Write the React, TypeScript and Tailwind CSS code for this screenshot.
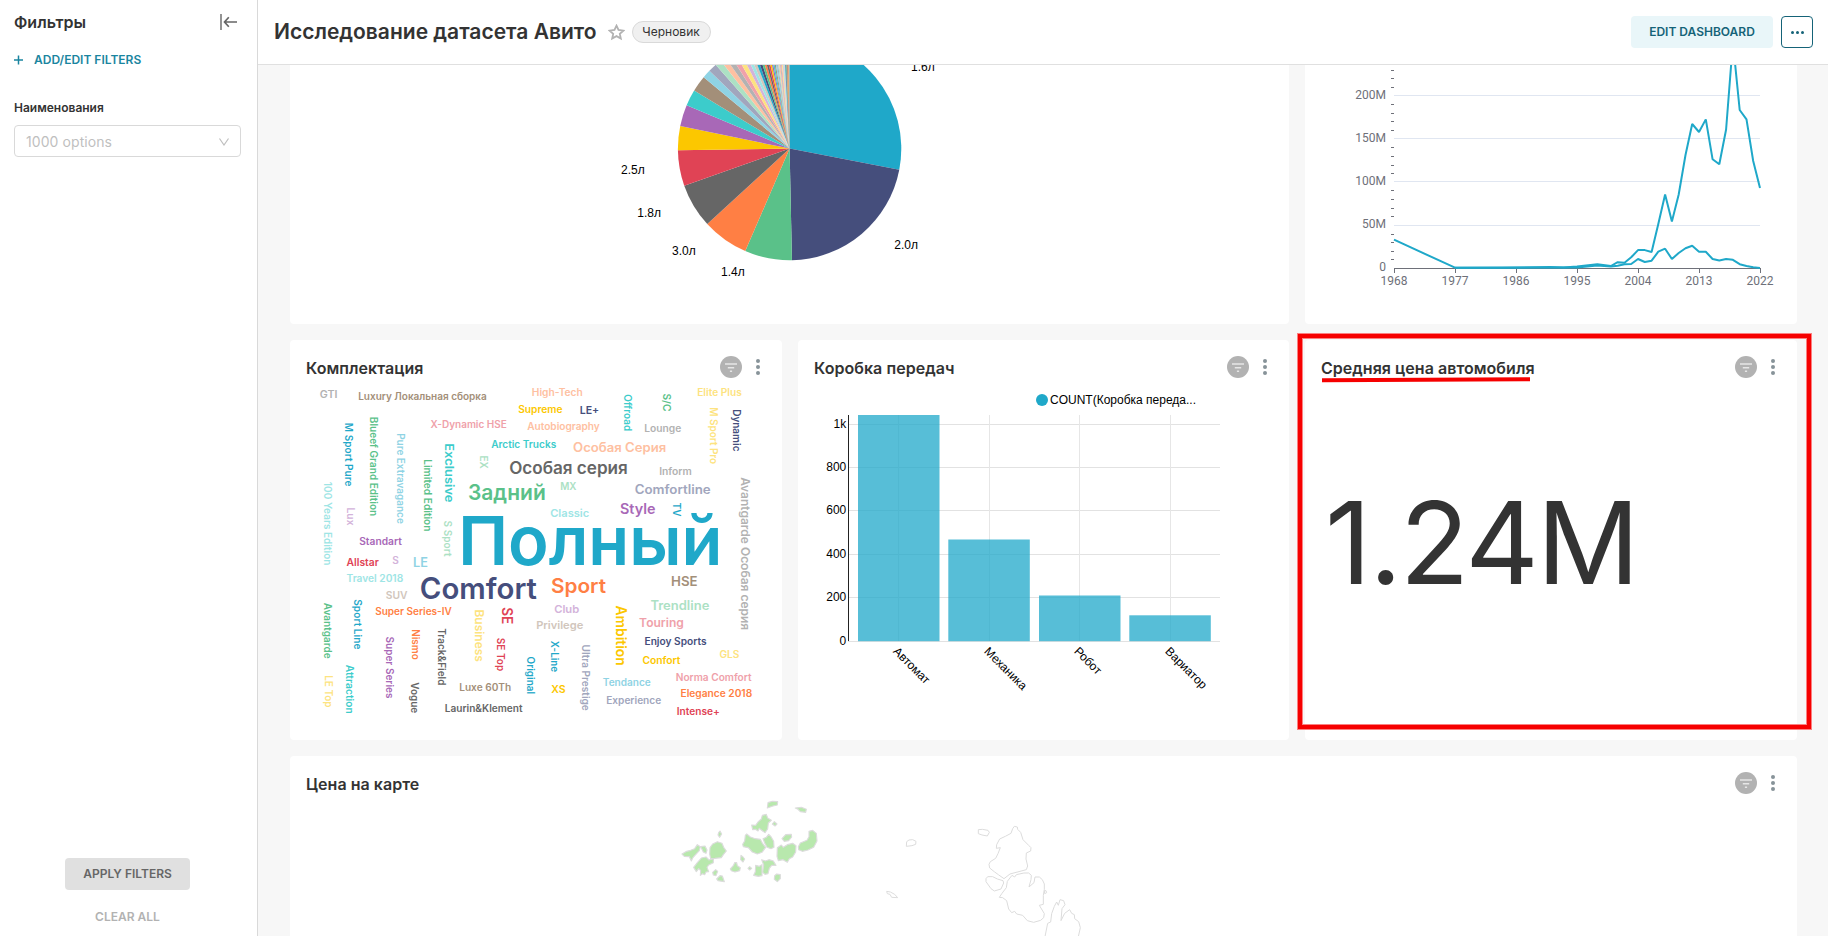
import React from "react";

const PALETTE = [
  "#1FA8C9", "#454E7C", "#5AC189", "#FF7F44", "#666666", "#E04355", "#FCC700", "#A868B7", "#3CCCCB", "#A38F79",
  "#8FD3E4", "#A1A6BD", "#ACE1C4", "#FEC0A1", "#B2B2B2", "#EFA1AA", "#FDE380", "#D3B3DA", "#9EE5E5", "#D1C6BC",
];
const [BLUE, NAVY, GREEN, ORANGE, GRAY, RED, YELLOW, PURPLE, TEAL, BROWN, SKY, SLATE, MINT, PEACH, SILVER, ROSE, LEMON, LILAC, AQUA, SAND] = PALETTE;

function CardHeader({ title }: { title: string }) {
  return (
    <div className="flex h-[54px] items-center pl-4 pr-[22px]">
      <h2 className="flex-1 pt-px text-[16px] leading-5 font-semibold tracking-[0.04px] text-[#333333]">{title}</h2>
      <svg width="22" height="22" viewBox="0 0 22 22" className="mr-[14px]">
        <circle cx="11" cy="11" r="11" fill="#b2b2b2" />
        <path d="M5 8h12M7.8 11.7h6.4M9.9 15.3h2.2" stroke="#e6e6e6" strokeWidth="1.4" />
      </svg>
      <svg width="4" height="16" viewBox="0 0 4 16" fill="#879399">
        <circle cx="2" cy="2" r="2" />
        <circle cx="2" cy="8" r="2" />
        <circle cx="2" cy="14" r="2" />
      </svg>
    </div>
  );
}

const PIE_ENDS = [
  100.9, 178.8, 203.4, 227.5, 250.6, 269.1, 281.7, 292.8, 301.3, 309.7, 314.1, 318.6, 321.9, 324.8, 327.6, 330.3, 333,
  335.2, 337.1, 338.9, 340.5, 342.1, 343.5, 344.8, 346, 347.1, 348.1, 349, 349.9, 350.7, 351.5, 352.2, 352.9, 353.6,
  354.2, 354.8, 355.4, 355.9, 356.4, 356.9, 357.3, 357.7, 358.1, 358.5, 358.8, 359.1, 359.4, 359.6, 359.8, 360,
];

function PieChart() {
  const cx = 789.6, cy = 148.6, r = 111.7;
  const at = (deg: number) => {
    const a = (deg * Math.PI) / 180;
    return `${(cx + r * Math.sin(a)).toFixed(2)} ${(cy - r * Math.cos(a)).toFixed(2)}`;
  };
  const labels: [string, number, number][] = [
    ["1.6л", 911, 70.5], ["2.0л", 894.3, 249], ["1.4л", 721, 276], ["3.0л", 672, 255], ["1.8л", 637.3, 217], ["2.5л", 621, 174],
  ];
  return (
    <svg width="999" height="259" viewBox="290 65 999 259" className="block">
      {PIE_ENDS.map((end, i) => (
        <path key={i} d={`M${cx} ${cy}L${at(i ? PIE_ENDS[i - 1] : 0)}A${r} ${r} 0 0 1 ${at(end)}Z`} fill={PALETTE[i % 20]} />
      ))}
      <g fontSize="12" fill="#000">
        {labels.map(([t, x, y]) => <text key={t} x={x} y={y} className="font-['Liberation_Sans',sans-serif]">{t}</text>)}
      </g>
    </svg>
  );
}

const PRICE_TOTAL: [number, number][] = [
  [1968, 239.7], [1977, 267.7], [1984, 267.7], [1991, 267.1], [1993, 267.5], [1995, 266.5], [1998, 264.2], [2000, 266], [2001, 262.2], [2002, 262.7],
  [2003, 257.3], [2004, 250.1], [2005, 250.1], [2006, 252], [2007, 224], [2008, 194.5], [2009, 221.5], [2010, 194.5],
  [2011, 155], [2012, 124], [2013, 132], [2014, 119.4], [2015, 159.3], [2016, 164.3], [2017, 129.5], [2018, 42],
  [2019, 110], [2020, 119.3], [2021, 161], [2022, 188],
];
const PRICE_COUNT: [number, number][] = [
  [1977, 267.8], [1995, 267.4], [1998, 265.5], [2000, 266.6], [2001, 265.8], [2002, 264.3], [2003, 264], [2004, 259], [2005, 262], [2006, 260.7],
  [2007, 251.7], [2008, 248.7], [2009, 259], [2010, 253], [2011, 248.3], [2012, 245.8], [2013, 251.8], [2014, 251.8],
  [2015, 259], [2016, 260.4], [2017, 259.1], [2018, 259.8], [2019, 264.2], [2020, 266], [2021, 267.3], [2022, 268],
];

function LineChart() {
  const x = (year: number) => 1394 + (year - 1968) * 6.778;
  const points = (d: [number, number][]) => d.map(([yr, y]) => `${x(yr).toFixed(1)},${y}`).join(" ");
  const minor = Array.from({ length: 24 }, (_, i) => i).filter((i) => i % 5 !== 0);
  return (
    <svg width="492" height="259" viewBox="1305 65 492 259" className="block">
      {[225.5, 181.5, 138.5, 95.5].map((y) => <path key={y} d={`M1394 ${y}H1760`} stroke="#E0E6F1" />)}
      {minor.map((i) => <path key={i} d={`M1391 ${Math.round(268 - i * 8.62) + 0.5}h3`} stroke="#6E7079" />)}
      <path d="M1394 268.5H1760.5" stroke="#6E7079" />
      <g fontSize="12" fill="#6E7079">
        {[1968, 1977, 1986, 1995, 2004, 2013, 2022].map((yr) => (
          <React.Fragment key={yr}>
            <path d={`M${Math.round(x(yr)) + 0.5} 268v5`} stroke="#6E7079" />
            <text x={x(yr)} y="285" textAnchor="middle" className="font-['Roboto',sans-serif]">{yr}</text>
          </React.Fragment>
        ))}
        {["0", "50M", "100M", "150M", "200M"].map((t, i) => (
          <text key={t} x="1386" y={271 - i * 43.1} textAnchor="end" className="font-['Roboto',sans-serif]">{t}</text>
        ))}
      </g>
      <g fill="none" stroke={BLUE} strokeWidth="2" strokeLinejoin="bevel">
        <polyline points={points(PRICE_TOTAL)} />
        <polyline points={points(PRICE_COUNT)} />
      </g>
    </svg>
  );
}

// text, start x, end x, baseline y, font size, colour
const ACROSS: [string, number, number, number, number, string][] = [
  ["GTI", 320.3, 337, 398.3, 10, SILVER],
  ["Luxury Локальная сборка", 358.7, 486.3, 400.3, 10, BROWN],
  ["High-Tech", 532.3, 582.3, 396, 10, PEACH],
  ["Elite Plus", 697.7, 741.3, 396, 10, LEMON],
  ["Supreme", 518.7, 562, 413, 10, YELLOW],
  ["LE+", 580.3, 598.7, 413.7, 10.5, NAVY],
  ["X-Dynamic HSE", 431, 506.3, 428, 10, ROSE],
  ["Autobiography", 527.7, 599.3, 430, 10, PEACH],
  ["Lounge", 644.7, 680.7, 432, 10, SILVER],
  ["Arctic Trucks", 491.7, 555.7, 448, 10, TEAL],
  ["Особая Серия", 573.7, 665.7, 452, 12.5, PEACH],
  ["Особая серия", 510, 627, 474, 16.8, GRAY],
  ["Inform", 659.7, 691.3, 475, 10, SILVER],
  ["Задний", 469, 544.7, 500, 21.5, GREEN],
  ["MX", 560.7, 576, 490, 10, MINT],
  ["Comfortline", 635.3, 710, 494, 12.7, SLATE],
  ["Style", 620.7, 654.7, 514, 14.3, PURPLE],
  ["Classic", 550.7, 588.7, 517, 10.5, AQUA],
  ["Полный", 461.6, 719, 565, 68, BLUE],
  ["Standart", 359.7, 401.3, 545, 10, PURPLE],
  ["Allstar", 347, 378.3, 566, 10, RED],
  ["S", 392.7, 398.3, 564, 10, LILAC],
  ["LE", 413.7, 427.3, 566.7, 12.5, SKY],
  ["Travel 2018", 347, 402.7, 582, 10, AQUA],
  ["SUV", 386.3, 407, 598.7, 10.5, SAND],
  ["Comfort", 421.3, 535.5, 599, 29.2, NAVY],
  ["Super Series-IV", 375.7, 451.3, 615.3, 10, ORANGE],
  ["Luxe 60Th", 459.7, 510.7, 691, 10, BROWN],
  ["Laurin&Klement", 445.3, 522, 712, 10, GRAY],
  ["Sport", 552, 605, 593.3, 20, ORANGE],
  ["HSE", 671.7, 697, 586, 12.7, BROWN],
  ["Club", 554.7, 578.7, 613, 10.8, LILAC],
  ["Trendline", 651, 708.7, 610, 12.5, MINT],
  ["Privilege", 536.7, 582.7, 629, 10.8, SAND],
  ["Touring", 639.7, 683.3, 627, 11.7, ROSE],
  ["Enjoy Sports", 645, 706, 645, 10, NAVY],
  ["Confort", 643, 680, 664, 10, YELLOW],
  ["GLS", 720, 739, 658, 10, LEMON],
  ["Tendance", 603.3, 650.3, 686, 10, SKY],
  ["XS", 551.7, 565, 693, 10.5, YELLOW],
  ["Experience", 606.7, 660.7, 704, 10, SLATE],
  ["Norma Comfort", 676.3, 751, 681, 10, ROSE],
  ["Elegance 2018", 681, 751.7, 697, 10, ORANGE],
  ["Intense+", 677.3, 719.3, 715, 10, RED],
];

// text, start y, end y, baseline x, font size, colour
const DOWN: [string, number, number, number, number, string][] = [
  ["M Sport Pure", 423.3, 486, 345.3, 10, BLUE],
  ["Blueef Grand Edition", 417.3, 515.7, 370.3, 10, GREEN],
  ["Pure Extravagance", 433.7, 523.3, 397.5, 10, SKY],
  ["Limited Edition", 459.7, 531, 424.3, 10, GREEN],
  ["Exclusive", 443.7, 502, 445.5, 12.3, TEAL],
  ["EX", 456, 468.3, 480.2, 10, MINT],
  ["100 Years Edition", 482.3, 565, 324.5, 10, AQUA],
  ["Lux", 508, 525, 347.2, 10, LILAC],
  ["S Sport", 521, 556, 444.5, 10, MINT],
  ["Offroad", 394.7, 430.7, 624.5, 10, TEAL],
  ["S/C", 394, 411, 663.2, 10, GREEN],
  ["M Sport Pro", 407.7, 463.7, 710.4, 10, LEMON],
  ["Dynamic", 409.7, 451, 733.5, 10, NAVY],
  ["TV", 503, 516, 673.2, 10.5, BLUE],
  ["Avantgarde Особая серия", 477.7, 629.7, 741.3, 11.8, SILVER],
  ["Avantgarde", 603.3, 658.3, 324.5, 10, GREEN],
  ["Sport Line", 599.7, 649, 354.2, 10, BLUE],
  ["Super Series", 637, 698, 386.5, 10, PURPLE],
  ["Nismo", 629.7, 659.3, 412.2, 10, ORANGE],
  ["Track&Field", 628.7, 685, 438.4, 10, GRAY],
  ["Business", 610, 661.3, 476, 11.7, LEMON],
  ["SE", 607.7, 623.7, 502.5, 14, RED],
  ["SE Top", 638.3, 670.7, 497.5, 10, RED],
  ["Original", 657, 693.7, 527.5, 10, BLUE],
  ["LE Top", 675.7, 707, 325.5, 10, LEMON],
  ["Attraction", 665.3, 713.3, 346.2, 10, TEAL],
  ["Vogue", 682.7, 712.7, 411.5, 10, GRAY],
  ["Ambition", 606, 665.3, 616.3, 14.3, YELLOW],
  ["X-Line", 641.3, 671.7, 551.5, 10, BLUE],
  ["Ultra Prestige", 645, 710.3, 582.2, 10, SLATE],
];

function WordCloud() {
  return (
    <svg width="460" height="346" viewBox="306 394 460 346" overflow="visible" className="ml-4 block font-semibold">
      {ACROSS.map(([t, x1, x2, y, size, fill]) => (
        <text key={t} x={x1 - size * 0.05} y={y} fontSize={size} fill={fill} textLength={x2 - x1 + size * 0.1} lengthAdjust="spacingAndGlyphs">{t}</text>
      ))}
      {DOWN.map(([t, y1, y2, x, size, fill]) => (
        <text key={t} transform={`translate(${x - 0.7} ${y1 - 0.5}) rotate(90)`} fontSize={size} fill={fill} textLength={y2 - y1 + 1} lengthAdjust="spacingAndGlyphs">{t}</text>
      ))}
    </svg>
  );
}

const GEARBOXES: [string, number, number, number][] = [
  ["Автомат", 858, 898.5, 415],
  ["Механика", 948.3, 989.5, 539.5],
  ["Робот", 1039, 1079.5, 595.5],
  ["Вариатор", 1129.3, 1170.5, 615.3],
];

function BarChart() {
  return (
    <svg width="491" height="346" viewBox="798 394 491 346" overflow="visible" className="block">
      <circle cx="1042" cy="400" r="6" fill={BLUE} />
      <text x="1050" y="404" fontSize="12" className="font-['Liberation_Sans',sans-serif]" textLength="146">COUNT(Коробка переда...</text>
      {[424.5, 467.5, 510.5, 554.5, 597.5, 641.5].map((y, i) => (
        <React.Fragment key={y}>
          <path d={`M848 ${y}H1220`} stroke="#e2e2e2" />
          <text x="846.3" y={y + 3.8} fontSize="12" textAnchor="end" className="font-['Liberation_Sans',sans-serif]">
            {["1k", "800", "600", "400", "200", "0"][i]}
          </text>
        </React.Fragment>
      ))}
      {GEARBOXES.map(([name, x, tick, top]) => (
        <React.Fragment key={name}>
          <path d={`M${tick} 415V641`} stroke="#e6e6e6" />
          <rect x={x} y={top} width="81.500" height={641.2 - top} fill={BLUE} fillOpacity="0.75" />
          <text transform={`translate(${tick - 6} 652) rotate(45)`} fontSize="12" className="font-['Liberation_Sans',sans-serif]">{name}</text>
        </React.Fragment>
      ))}
      <path d="M848.5 415V641" stroke="#222" />
    </svg>
  );
}

const REGIONS = [
  "M66 222L80 214L92 211L104 206L112 194L121 200L118 212L104 227L98 234L94 243L88 230L73 229Z",
  "M122 200L135 198L141 210L138 220L130 216Z",
  "M150 203L158 192L172 185L186 190L191 202L199 213L190 224L184 233L165 235L152 236L149 222Z",
  "M101 262L112 248L124 234L138 231L147 240L160 236L160 248L146 255L141 262L146 275L138 276L134 284L128 281L121 286L122 272L116 266L109 275Z",
  "M158 277L167 269L173 274L168 287L160 285Z",
  "M170 297L180 287L187 288L193 305L174 302Z",
  "M176 158L180 153L185 162L179 172L174 165Z",
  "M211 267L220 257L224 248L230 248L232 257L241 263L239 272L225 276L214 272Z",
  "M243 226L249 231L254 237L249 246L242 239Z",
  "M248 193L254 183L256 166L260 162L271 171L286 176L301 178L308 191L317 202L306 217L292 222L277 216L265 203L250 200Z",
  "M309 176L319 172L326 163L333 170L341 184L342 202L333 206L321 202L314 189Z",
  "M275 135L287 136L294 126L304 117L307 106L319 103L323 114L334 121L325 129L323 147L315 158L304 150L298 145L294 153L286 148L278 149Z",
  "M337 132L343 125L351 132L345 138Z",
  "M322 84L324 68L337 64L353 65L352 75L339 78Z",
  "M406 84L424 82L439 88L437 97L421 95L414 88Z",
  "M366 176L377 164L394 163L395 171L386 182L373 184Z",
  "M352 203L364 195L370 202L382 194L398 190L408 197L407 216L398 231L388 236L382 247L369 239L355 242L351 229Z",
  "M415 200L421 189L441 181L447 170L447 154L458 151L469 160L471 183L461 202L444 210L427 214L416 209Z",
  "M281 286L286 275L287 256L298 259L306 254L306 287L295 289Z",
  "M305 239L316 243L327 239L340 243L348 256L335 256L328 265L324 281L315 283L308 277L311 255Z",
  "M264 265L269 260L275 265L269 270Z",
  "M344 287L350 282L361 284L361 296L352 305L343 298Z",
];
const OUTLINES = [
  "M680 334L691 336L704 343L713 353L695 352L690 343L682 341Z",
  "M739 199L740 185L747 180L758 179L768 184L767 193L756 197Z",
  "M955 149L967 148L984 151L988 157L982 168L966 165L955 161Z",
  "M1058 146L1063 139L1072 141L1073 148L1082 157L1089 179L1107 197L1113 203L1112 213L1099 219L1098 237L1103 258L1099 269L1080 274L1050 282L1032 296L1015 284L1004 276L989 264L987 253L991 245L1007 235L1014 221L1021 203L1009 205L1010 194L1019 177L1036 169L1053 160Z",
  "M978 296L983 290L998 290L1012 297L1029 302L1031 309L1023 327L1003 333L993 326L978 305Z",
  "M1018 352L1026 340L1039 323L1042 304L1056 286L1064 291L1069 284L1092 279L1106 279L1114 286L1113 299L1107 321L1122 308L1125 291L1138 291L1147 299L1153 312L1153 328L1150 346L1150 373L1138 376L1153 401L1151 413L1142 421L1121 427L1102 422L1088 406L1070 402L1064 394L1055 398L1046 387L1040 362L1028 353Z",
  "M1153 332L1158 332L1160 338L1154 341Z",
  "M1155 470L1163 430L1172 426L1175 401L1183 379L1190 366L1195 376L1200 359L1211 362L1215 374L1206 386L1203 422L1214 400L1229 389L1235 400L1243 404L1244 416L1256 425L1261 443L1255 470",
];

function CountryMap() {
  return (
    <svg width="1507" height="126" viewBox="290 810 1507 126" overflow="visible" className="block">
      <g transform="translate(660 780) scale(.33333)" stroke="#dcdcdc" strokeWidth="3.4" strokeLinejoin="round" fill="none">
        {REGIONS.map((d) => <path key={d} d={d} fill="#b8e8ad" />)}
        {OUTLINES.map((d) => <path key={d} d={d} strokeWidth="3" />)}
      </g>
    </svg>
  );
}

function Sidebar() {
  return (
    <aside className="flex w-[258px] shrink-0 flex-col border-r border-[#d9d9d9] bg-white px-[14px]">
      <div className="flex h-11 items-center justify-between pr-[6px]">
        <h2 className="text-[16px] font-semibold text-[#333]">Фильтры</h2>
        <svg width="17" height="16" viewBox="0 0 17 16" fill="none" stroke="#666" className="block">
          <path d="M1 0v16" strokeWidth="1.4" />
          <path d="M17 8H4.5M8.8 3.2L4.5 8l4.300 4.800" strokeWidth="1.7" />
        </svg>
      </div>
      <div className="mt-[7px] flex h-[18px] items-center text-[12px] font-semibold text-[#1A85A0]">
        <svg width="9" height="10" viewBox="0 0 9 10" stroke="currentColor" strokeWidth="1.5" className="mr-[11px]">
          <path d="M0 5h9M4.5 .5v9" />
        </svg>
        ADD/EDIT FILTERS
      </div>
      <div className="mt-[30px] h-[18px] text-[12px] leading-[18px] font-semibold text-[#333]">Наименования</div>
      <div className="mt-[8px] flex h-8 w-[227px] items-center justify-between rounded border border-[#d9d9d9] pr-[11px] pl-[11px] text-[14px] text-[#bfbfbf]">
        <span className="tracking-[0.08px]">1000 options</span>
        <svg width="10" height="8" viewBox="0 0 10 8" fill="none" stroke="#bfbfbf" strokeWidth="1.2" className="mt-px">
          <path d="M.5 .5L5 7l4.500-6.500" />
        </svg>
      </div>
      <div className="mt-auto flex flex-col items-center pr-[2px] pb-[3px] text-[12px] font-semibold">
        <button className="h-8 w-[125px] rounded bg-[#e0e0e0] text-[#666]">APPLY FILTERS</button>
        <button className="mt-[11px] h-8 text-[#b2b2b2]">CLEAR ALL</button>
      </div>
    </aside>
  );
}

export default function App() {
  return (
    <div className="relative flex h-[936px] w-[1828px] overflow-hidden bg-[#f7f7f7] font-['Inter',sans-serif]">
      <Sidebar />
      <div className="flex min-w-0 flex-1 flex-col">
        <header className="flex h-[65px] shrink-0 items-center border-b border-[#e0e0e0] bg-white pr-[15px] pl-4">
          <h1 className="text-[21px] font-semibold text-[#333]">Исследование датасета Авито</h1>
          <svg width="17" height="17" viewBox="0 0 17 17" fill="none" stroke="#b2b2b2" strokeWidth="1.8" className="ml-[11px]">
            <path d="M8.500 1.700L10.500 6l4.900.6-3.600 3.200 1 4.700-4.300-2.400-4.300 2.400 1-4.700L1.600 6.600 6.500 6z" />
          </svg>
          <span className="ml-[7px] flex h-[22px] w-[79px] items-center justify-center rounded-full border border-[#d9d9d9] bg-[#f0f0f0] text-[12px] text-[#333]">
            Черновик
          </span>
          <button className="ml-auto h-8 w-[142px] rounded bg-[#E9F6F9] text-[12px] font-semibold text-[#156378]">EDIT DASHBOARD</button>
          <button className="ml-2 flex h-8 w-8 items-center justify-center gap-[2px] rounded border border-[#156378]">
            <i className="size-[3px] rounded-full bg-[#156378]" />
            <i className="size-[3px] rounded-full bg-[#156378]" />
            <i className="size-[3px] rounded-full bg-[#156378]" />
          </button>
        </header>
        <main className="flex flex-1 flex-col gap-4 overflow-hidden pr-[31px] pl-8">
          <div className="flex h-[259px] shrink-0 justify-between">
            <section className="w-[999px] overflow-hidden rounded-b bg-white"><PieChart /></section>
            <section className="w-[492px] overflow-hidden rounded-b bg-white"><LineChart /></section>
          </div>
          <div className="flex h-[400px] shrink-0 justify-between">
            <section className="w-[492px] rounded bg-white">
              <CardHeader title="Комплектация" />
              <WordCloud />
            </section>
            <section className="w-[491px] rounded bg-white">
              <CardHeader title="Коробка передач" />
              <BarChart />
            </section>
            <section className="w-[492px] rounded bg-white">
              <CardHeader title="Средняя цена автомобиля" />
              <div className="flex h-[298px] items-center pl-5 text-[114px] leading-none tracking-[-2.2px] text-[#333]">1.24M</div>
            </section>
          </div>
          <section className="flex-1 rounded-t bg-white">
            <CardHeader title="Цена на карте" />
            <CountryMap />
          </section>
        </main>
      </div>
      <div className="pointer-events-none absolute top-[333px] left-[1297px] h-[397px] w-[515px] border border-[#fb8080]">
        <div className="h-full w-full border-4 border-[#f60000]">
          <div className="h-full w-full border border-[#fb8080]" />
        </div>
      </div>
      <svg width="212" height="8" viewBox="0 0 212 8" className="pointer-events-none absolute top-[376px] left-[1321px]">
        <path d="M1 4.200L209 3.200" stroke="#f60000" strokeWidth="4" />
      </svg>
    </div>
  );
}
